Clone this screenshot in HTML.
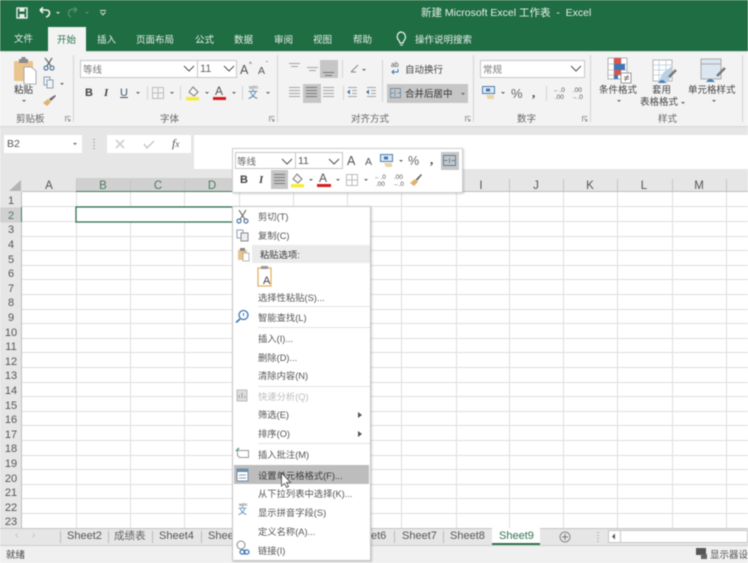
<!DOCTYPE html>
<html lang="zh"><head><meta charset="utf-8"><title>Excel</title>
<style>
*{box-sizing:border-box}
html,body{margin:0;padding:0;width:748px;height:563px;overflow:hidden;background:#fff}
#p{position:relative;width:748px;height:563px;overflow:hidden;font-family:"Liberation Sans","Noto Sans CJK SC",sans-serif;font-size:9.5px;color:#444;filter:blur(.45px)}
.a{position:absolute;white-space:nowrap;line-height:1}
.b{position:absolute}
.w{color:#e6efe9}
.g{color:#666}
.c{transform:translateX(-50%)}
.it{position:absolute;left:258px;margin-top:1px;font-size:9.3px;color:#555;white-space:nowrap;line-height:12px}
.sep{position:absolute;left:258px;width:112px;height:1px;background:#e2e2e2}
.rh{position:absolute;left:0;width:22px;margin-top:1px;text-align:center;font-size:11px;color:#555;line-height:12px}
.ch{position:absolute;top:180px;font-size:11.5px;color:#555;line-height:13px;transform:translateX(-50%)}
.box{position:absolute;background:#fff;border:1px solid #c6c6c6}
svg{position:absolute;overflow:visible}
.dd{position:absolute;width:0;height:0;border-left:2px solid transparent;border-right:2px solid transparent;border-top:2px solid #666}
.vs{position:absolute;width:1px;background:#d4d4d4}
</style></head><body><div id="p">

<!-- title + tabs -->
<div class="b" style="left:0;top:0;width:748px;height:51px;background:#1f6d43"></div>
<svg style="left:0;top:0" width="120" height="26">
<rect x="17" y="8" width="10" height="10" fill="none" stroke="#e6efe9" stroke-width="1.4"/><rect x="19.5" y="8.5" width="5" height="3" fill="#e6efe9"/><rect x="19.5" y="14" width="5" height="4" fill="#e6efe9"/>
<path d="M40 10 L43 7.5 M40 10 L43 13 M40 10 H46 Q49.5 10 49.5 13 Q49.5 16 46 17" fill="none" stroke="#eef4f0" stroke-width="1.6"/>
<path d="M56 12 h4 l-2 2z" fill="#dce8e1"/>
<path d="M77 9.5 L74 7.5 M77 9.5 L74 12.5 M77 9.5 H72 Q68.5 9.5 68.5 13 Q68.5 16 71 17" fill="none" stroke="#558c6e" stroke-width="1.4"/>
<path d="M85 12 h4 l-2 2z" fill="#558c6e"/>
<path d="M100 10.500 h6 M100.500 12 l2.500 3 l2.500-3" fill="none" stroke="#cfe0d6" stroke-width="1"/>
</svg>
<div class="a w" style="left:421px;top:7px;font-size:10.5px;line-height:12px">新建 Microsoft Excel 工作表&nbsp; -&nbsp; Excel</div>
<div class="b" style="left:48px;top:27px;width:38px;height:25px;background:#f3f3f3"></div>
<div class="a w" style="left:14px;top:35px">文件</div>
<div class="a" style="left:57px;top:36px;color:#23724a">开始</div>
<div class="a w" style="left:97px;top:36px">插入</div>
<div class="a w" style="left:136px;top:36px">页面布局</div>
<div class="a w" style="left:195px;top:36px">公式</div>
<div class="a w" style="left:234px;top:36px">数据</div>
<div class="a w" style="left:274px;top:36px">审阅</div>
<div class="a w" style="left:313px;top:36px">视图</div>
<div class="a w" style="left:353px;top:36px">帮助</div>
<svg style="left:394px;top:31px" width="14" height="16"><path d="M5.500 1 a5 5 0 0 1 3.500 8.500 L8 12 H5 L4 9.500 A5 5 0 0 1 5.500 1 Z" transform="translate(1 0)" fill="none" stroke="#eef4f0" stroke-width="1.200"/><path d="M6 14h3" stroke="#eef4f0"/></svg>
<div class="a w" style="left:415px;top:36px">操作说明搜索</div>

<!-- ribbon -->
<div class="b" style="left:0;top:51px;width:748px;height:75px;background:#f3f3f3"></div>
<div class="b" style="left:0;top:51px;width:48px;height:1px;background:#cfdcd4"></div>
<div class="b" style="left:86px;top:51px;width:662px;height:1px;background:#cfdcd4"></div>
<div class="b" style="left:0;top:126px;width:748px;height:1px;background:#d8d8d8"></div>
<div class="vs" style="left:73px;top:55px;height:67px"></div>
<div class="vs" style="left:277px;top:55px;height:67px"></div>
<div class="vs" style="left:473px;top:55px;height:67px"></div>
<div class="vs" style="left:590px;top:55px;height:67px"></div>
<div class="vs" style="left:742px;top:55px;height:67px"></div>

<!-- clipboard -->
<svg style="left:12px;top:56px" width="60" height="52">
<rect x="2" y="5" width="19" height="20" rx="1" fill="#e9c48e"/>
<rect x="7" y="3" width="9" height="4" fill="#8a8a8a"/><rect x="9.500" y="1" width="4" height="3" fill="#8a8a8a"/>
<path d="M12 11 h7 l5 4 v13 h-12z" fill="#fff" stroke="#9a9a9a" stroke-width=".8"/>
<circle cx="34" cy="12" r="2" fill="none" stroke="#5579a0" stroke-width="1.200"/><circle cx="40" cy="12" r="2" fill="none" stroke="#5579a0" stroke-width="1.200"/>
<path d="M35 10 L40 2 M39 10 L33 2" stroke="#666" stroke-width="1.200"/>
<rect x="32" y="21" width="6" height="8" fill="none" stroke="#8aa0b8"/><rect x="35" y="24" width="6" height="8" fill="#f3f3f3" stroke="#8aa0b8"/>
<path d="M48 27 h4 l-2 2z" fill="#666"/>
<path d="M31 47 l5-4 l3 3 l-4 4z" fill="#e0b26e"/><path d="M37 43 l6-4 l1 1 l-5 5z" fill="#666"/>
</svg>
<div class="a" style="left:14px;top:86px;color:#333">粘贴</div>
<div class="dd" style="left:22px;top:100px"></div>
<div class="a g" style="left:16px;top:115px">剪贴板</div>
<svg style="left:65px;top:116px" width="6" height="6"><path d="M.5 5.500V.5H5.500M2 2l3 3M5 3v2H3" fill="none" stroke="#888" stroke-width=".8"/></svg>

<!-- font -->
<div class="box" style="left:80px;top:60px;width:118px;height:18px"></div>
<div class="box" style="left:197px;top:60px;width:40px;height:18px"></div>
<div class="a g" style="left:83px;top:66px;color:#777">等线</div>
<div class="a g" style="left:200px;top:64px;font-size:11px">11</div>
<svg style="left:183px;top:65px" width="12" height="8"><path d="M1 1l5 5 5-5" fill="none" stroke="#555" stroke-width="1.100"/></svg>
<svg style="left:223px;top:65px" width="12" height="8"><path d="M1 1l5 5 5-5" fill="none" stroke="#555" stroke-width="1.100"/></svg>
<div class="a" style="left:240px;top:64px;font-size:12.500px;color:#555">A</div><div class="a" style="left:249px;top:62px;font-size:6px">^</div>
<div class="a" style="left:258px;top:66px;font-size:10.500px;color:#555">A</div><div class="a" style="left:266px;top:62px;font-size:6px">ˇ</div>
<div class="a" style="left:85px;top:88px;font-size:11px;font-weight:bold">B</div>
<div class="a" style="left:104px;top:88px;font-size:11px;font-style:italic;font-family:'Liberation Serif',serif;font-weight:bold">I</div>
<div class="a" style="left:120px;top:88px;font-size:11px;text-decoration:underline;color:#456">U</div>
<div class="dd" style="left:136px;top:92px"></div>
<div class="vs" style="left:147px;top:86px;height:14px"></div>
<svg style="left:152px;top:87px" width="13" height="13"><path d="M.5.5h11v11H.5zM6 .5v11M.5 6h11" fill="none" stroke="#bcbcbc"/></svg>
<div class="dd" style="left:170px;top:92px"></div>
<div class="vs" style="left:180px;top:86px;height:14px"></div>
<svg style="left:186px;top:85px" width="15" height="16"><path d="M7 2l5 5-4 4-5-4z" fill="#f6f6f6" stroke="#777"/><rect x="0" y="12" width="13" height="3.500" fill="#f7ec3c"/></svg>
<div class="dd" style="left:205px;top:92px"></div>
<div class="a" style="left:215px;top:85px;font-size:12px;color:#555">A</div>
<div class="b" style="left:213px;top:97px;width:13px;height:3px;background:#d8191e"></div>
<div class="dd" style="left:232px;top:92px"></div>
<div class="vs" style="left:242px;top:86px;height:14px"></div>
<div class="a" style="left:248px;top:91px;font-size:10px;color:#4c7aaa">文</div><div class="a" style="left:249px;top:86px;font-size:5px;color:#777">wén</div>
<div class="dd" style="left:266px;top:92px"></div>
<div class="a g" style="left:160px;top:115px">字体</div>
<svg style="left:269px;top:116px" width="6" height="6"><path d="M.5 5.500V.5H5.500M2 2l3 3M5 3v2H3" fill="none" stroke="#888" stroke-width=".8"/></svg>

<!-- align -->
<div class="b" style="left:320px;top:60px;width:18px;height:18px;background:#c6c6c6"></div>
<div class="b" style="left:303px;top:84px;width:18px;height:19px;background:#c6c6c6"></div>
<svg style="left:286px;top:60px" width="180" height="44">
<g fill="none" stroke="#a5a5a5" stroke-width="1"><path d="M3 3.500h11M5 6.500h7"/><path d="M21 7.500h11M23 10.500h7"/><path d="M37 12.500h11M39 15.500h7" stroke="#777"/>
<path d="M3 27.500h11M3 30.500h11M3 33.500h11M3 36.500h11"/><path d="M20 27.500h11M20 30.500h11M20 33.500h11M20 36.500h11" stroke="#777"/><path d="M37 27.500h11M37 30.500h11M37 33.500h11M37 36.500h11"/>
<path d="M62 27.500h9M62 36.500h9M66 30.500h5M66 33.500h5"/><path d="M81 27.500h9M81 36.500h9M85 30.500h5M85 33.500h5"/></g>
<path d="M61 32l3-2.500v5z" fill="#3e78b5"/><path d="M80 32l3-2.500v5z" fill="#3e78b5"/>
<path d="M65 12 L72 5 M65 12h5" stroke="#888" fill="none"/>
<path d="M76 9h4l-2 2z" fill="#666"/>
</svg>
<div class="vs" style="left:342px;top:60px;height:18px"></div>
<div class="vs" style="left:343px;top:86px;height:14px"></div>
<div class="vs" style="left:382px;top:60px;height:42px"></div>
<div class="a" style="left:391px;top:62px;font-size:7px;color:#555">ab</div>
<svg style="left:391px;top:69px" width="9" height="6"><path d="M7 0v3H1M3 1L1 3l2 2" fill="none" stroke="#3e78b5"/></svg>
<div class="a" style="left:405px;top:66px;color:#444">自动换行</div>
<div class="b" style="left:387px;top:84px;width:81px;height:19px;background:#c6c6c6"></div>
<svg style="left:390px;top:88px" width="12" height="11"><path d="M.5.5h10v9H.5z M.5 5h3M7.500 5h3M5 2v6" fill="none" stroke="#6d8ea8" stroke-width=".9"/></svg>
<div class="a" style="left:405px;top:90px;color:#333">合并后居中</div>
<div class="dd" style="left:461px;top:93px"></div>
<div class="a g" style="left:351px;top:115px">对齐方式</div>
<svg style="left:465px;top:116px" width="6" height="6"><path d="M.5 5.500V.5H5.500M2 2l3 3M5 3v2H3" fill="none" stroke="#888" stroke-width=".8"/></svg>

<!-- number -->
<div class="box" style="left:480px;top:60px;width:105px;height:18px"></div>
<div class="a" style="left:483px;top:66px;color:#777">常规</div>
<svg style="left:570px;top:65px" width="12" height="8"><path d="M1 1l5 5 5-5" fill="none" stroke="#555" stroke-width="1.100"/></svg>
<svg style="left:482px;top:86px" width="14" height="14"><rect x=".5" y=".5" width="12" height="7" fill="#dfe8f0" stroke="#4a80b0"/><rect x="4" y="2.500" width="4" height="3" fill="#3e78b5"/><path d="M4 9h8v4H6z" fill="#ecd2a8"/></svg>
<div class="dd" style="left:501px;top:92px"></div>
<div class="a g" style="left:511px;top:87px;font-size:13px;color:#666">%</div>
<div class="a" style="left:532px;top:86px;font-size:13px;font-weight:bold;color:#444;font-family:'Liberation Serif',serif">,</div>
<div class="vs" style="left:546px;top:86px;height:15px"></div>
<div class="a" style="left:553px;top:87px;font-size:6.500px;color:#555;line-height:7px;white-space:pre"><span style="color:#3e78b5">←</span>.0
 .00</div>
<div class="a" style="left:571px;top:87px;font-size:6.500px;color:#555;line-height:7px;white-space:pre"> .00
<span style="color:#3e78b5">→</span>.0</div>
<div class="a g" style="left:517px;top:115px">数字</div>
<svg style="left:582px;top:116px" width="6" height="6"><path d="M.5 5.500V.5H5.500M2 2l3 3M5 3v2H3" fill="none" stroke="#888" stroke-width=".8"/></svg>

<!-- styles -->
<svg style="left:600px;top:56px" width="145" height="30">
<rect x="8" y="2" width="19" height="21" fill="#fff" stroke="#b0b0b0"/>
<path d="M8 8h19M8 14h19M8 19h19M14 2v21M21 2v21" stroke="#c9c9c9" fill="none"/>
<rect x="14" y="2" width="7" height="6" fill="#d8554e"/><rect x="14" y="8" width="11" height="6" fill="#3e78b5"/><rect x="14" y="14" width="7" height="5" fill="#d8554e"/><rect x="14" y="19" width="4" height="4" fill="#3e78b5"/>
<rect x="21" y="17" width="10" height="10" fill="#fff" stroke="#999"/><path d="M24 21h5M24 23h5M28 19l-3 6" stroke="#555" stroke-width=".7"/>
<rect x="53" y="4" width="19" height="21" fill="#fff" stroke="#b4b4b4"/><path d="M53 9h19M53 14h19M53 19h19M59 4v21M66 4v21" stroke="#c6d5e3"/>
<path d="M58 27l5-10 9-7v10l-5 7z" fill="#b9cfe3"/><path d="M58 27q4-6 8 0z" fill="#4a80b0"/><path d="M69 21l7-7" stroke="#777" stroke-width="2.500"/>
<rect x="101" y="3" width="20" height="20" fill="#dbe6f0" stroke="#aaa"/><path d="M101 8h20" stroke="#aaa"/>
<path d="M106 26q4-6 9 0z" fill="#4a80b0"/><path d="M117 20l8-8" stroke="#777" stroke-width="2.500"/>
</svg>
<div class="a" style="left:599px;top:86px;color:#444">条件格式</div>
<div class="dd" style="left:617px;top:100px"></div>
<div class="a" style="left:652px;top:86px;color:#444">套用</div>
<div class="a" style="left:640px;top:98px;color:#444">表格格式</div>
<div class="dd" style="left:681px;top:102px"></div>
<div class="a" style="left:688px;top:86px;color:#444">单元格样式</div>
<div class="dd" style="left:712px;top:100px"></div>
<div class="a g" style="left:658px;top:115px">样式</div>

<!-- formula bar -->
<div class="b" style="left:0;top:127px;width:748px;height:51px;background:#e6e6e6"></div>
<div class="b" style="left:4px;top:135px;width:78px;height:18px;background:#fff"></div>
<div class="a" style="left:7px;top:139px;font-size:10.500px;color:#555">B2</div>
<div class="dd" style="left:73px;top:143px"></div>
<svg style="left:93px;top:138px" width="3" height="13"><path d="M1 1v1M1 4v1M1 7v1M1 10v1" stroke="#999" stroke-width="1.500"/></svg>
<div class="b" style="left:107px;top:135px;width:84px;height:18px;background:#fff"></div>
<svg style="left:115px;top:139px" width="45" height="11"><path d="M1 1l8 8M9 1l-8 8" stroke="#c4c4c4" stroke-width="1.300" fill="none"/><path d="M29 5l3 4 7-7" stroke="#c4c4c4" stroke-width="1.300" fill="none"/></svg>
<div class="a" style="left:172px;top:137px;font-size:12px;font-style:italic;font-family:'Liberation Serif',serif;color:#555"><i>f</i><span style="font-size:9px">x</span></div>
<div class="b" style="left:194px;top:135px;width:554px;height:34px;background:#fff"></div>

<!-- grid -->
<div class="b" style="left:0;top:178px;width:748px;height:14px;background:#e6e6e6"></div>
<div class="b" style="left:0;top:192px;width:22px;height:336px;background:#e6e6e6"></div>
<svg style="left:0;top:178px" width="748" height="350">
<path d="M9 13L21 2V13Z" fill="#b4b4b4"/>
<rect x="76" y="0" width="163" height="14" fill="#d0d0d0"/>
<rect x="0" y="29.500" width="22" height="15" fill="#d0d0d0"/>
<g stroke="#dfdfdf" stroke-width="1">
<path d="M76.500 14V350M130.500 14V350M184.500 14V350M239.500 14V350M293.500 14V350M347.500 14V350M401.500 14V350M456.500 14V350M509.500 14V350M563.500 14V350M617.500 14V350M672.500 14V350M726.500 14V350"/>
<path d="M22 28.500H748M22 43.500H748M22 58.500H748M22 72.500H748M22 87.500H748M22 101.500H748M22 116.500H748M22 131.500H748M22 145.500H748M22 160.500H748M22 174.500H748M22 189.500H748M22 204.500H748M22 218.500H748M22 233.500H748M22 247.500H748M22 262.500H748M22 277.500H748M22 291.500H748M22 306.500H748M22 320.500H748M22 335.500H748"/>
</g>
<g stroke="#c6c6c6"><path d="M76.500 1V13M130.500 1V13M184.500 1V13M239.500 1V13M293.500 1V13M347.500 1V13M401.500 1V13M456.500 1V13M509.500 1V13M563.500 1V13M617.500 1V13M672.500 1V13M726.500 1V13"/></g>
<path d="M22 13.500H748" stroke="#bdbdbd"/>
<path d="M21.500 14V350" stroke="#bdbdbd"/>
<path d="M76 13.500H239" stroke="#3f7a59" stroke-width="1"/>
<path d="M21.500 29V44" stroke="#3f7a59" stroke-width="1"/>
<rect x="76" y="29" width="163" height="15" fill="#fff" stroke="#2f7350" stroke-width="1.300"/>
</svg>
<div class="ch" style="left:49px">A</div><div class="ch" style="left:103px;color:#4f7a63">B</div><div class="ch" style="left:158px;color:#4f7a63">C</div><div class="ch" style="left:212px;color:#4f7a63">D</div>
<div class="ch" style="left:481px">I</div><div class="ch" style="left:536px">J</div><div class="ch" style="left:590px">K</div><div class="ch" style="left:644px">L</div><div class="ch" style="left:699px">M</div>

<div class="rh" style="top:194px">1</div><div class="rh" style="top:209px;color:#4f7a63">2</div><div class="rh" style="top:223px">3</div><div class="rh" style="top:238px">4</div><div class="rh" style="top:253px">5</div><div class="rh" style="top:267px">6</div><div class="rh" style="top:282px">7</div><div class="rh" style="top:296px">8</div><div class="rh" style="top:311px">9</div><div class="rh" style="top:326px">10</div><div class="rh" style="top:340px">11</div><div class="rh" style="top:355px">12</div><div class="rh" style="top:369px">13</div><div class="rh" style="top:384px">14</div><div class="rh" style="top:399px">15</div><div class="rh" style="top:413px">16</div><div class="rh" style="top:428px">17</div><div class="rh" style="top:442px">18</div><div class="rh" style="top:457px">19</div><div class="rh" style="top:472px">20</div><div class="rh" style="top:486px">21</div><div class="rh" style="top:501px">22</div><div class="rh" style="top:515px">23</div>

<!-- sheet tabs -->
<div class="b" style="left:0;top:528px;width:748px;height:18px;background:#e6e6e6;border-top:1px solid #c6c6c6;border-bottom:1px solid #cfcfcf"></div>
<div class="a" style="left:15px;top:531px;font-size:10px;color:#bbb">‹</div><div class="a" style="left:32px;top:531px;font-size:10px;color:#bbb">›</div>
<div class="vs" style="left:60px;top:531px;height:12px;background:#bbb"></div>
<div class="a" style="left:67px;top:530px;font-size:11px;line-height:13px;color:#555">Sheet2</div>
<div class="vs" style="left:108px;top:531px;height:12px;background:#bbb"></div>
<div class="a" style="left:114px;top:530px;font-size:10.500px;line-height:13px;color:#666">成绩表</div>
<div class="vs" style="left:152px;top:531px;height:12px;background:#bbb"></div>
<div class="a" style="left:159px;top:530px;font-size:11px;line-height:13px;color:#555">Sheet4</div>
<div class="vs" style="left:201px;top:531px;height:12px;background:#bbb"></div>
<div class="a" style="left:208px;top:530px;font-size:11px;line-height:13px;color:#555">Shee</div>
<div class="a" style="left:371px;top:530px;font-size:11px;line-height:13px;color:#555">et6</div>
<div class="vs" style="left:394px;top:531px;height:12px;background:#bbb"></div>
<div class="a" style="left:402px;top:530px;font-size:11px;line-height:13px;color:#555">Sheet7</div>
<div class="vs" style="left:443px;top:531px;height:12px;background:#bbb"></div>
<div class="a" style="left:450px;top:530px;font-size:11px;line-height:13px;color:#555">Sheet8</div>
<div class="b" style="left:492px;top:528px;width:48px;height:17px;background:#fff;border-bottom:2px solid #2f7350"></div>
<div class="a" style="left:499px;top:530px;font-size:11px;line-height:13px;color:#2f7350">Sheet9</div>
<svg style="left:559px;top:531px" width="12" height="12"><circle cx="6" cy="6" r="5" fill="none" stroke="#888"/><path d="M3 6h6M6 3v6" stroke="#777"/></svg>
<svg style="left:597px;top:532px" width="3" height="10"><path d="M1 0v1M1 3v1M1 6v1M1 9v1" stroke="#aaa" stroke-width="1.500"/></svg>
<div class="b" style="left:608px;top:530px;width:140px;height:13px;background:#fff;border:1px solid #c6c6c6"></div>
<div class="vs" style="left:620px;top:530px;height:13px;background:#c6c6c6"></div>
<svg style="left:611px;top:533px" width="5" height="7"><path d="M4 .5v6L1 3.500z" fill="#555"/></svg>

<!-- status -->
<div class="b" style="left:0;top:546px;width:748px;height:17px;background:#f0f0f0"></div>
<div class="a" style="left:6px;top:551px;color:#444">就绪</div>
<svg style="left:696px;top:548px" width="12" height="12"><rect x="0" y="0" width="10" height="7" fill="#555"/><rect x="5" y="6" width="6" height="5" fill="#666"/></svg>
<div class="a" style="left:710px;top:551px;color:#555">显示器设</div>

<!-- mini toolbar -->
<div class="b" style="left:232px;top:148px;width:231px;height:45px;background:#fff;border:1px solid #d0d0d0;box-shadow:1px 1px 2px rgba(0,0,0,.18)"></div>
<div class="box" style="left:235px;top:152px;width:61px;height:17px"></div>
<div class="box" style="left:295px;top:152px;width:48px;height:17px"></div>
<div class="a" style="left:237px;top:158px;color:#666">等线</div>
<div class="a" style="left:298px;top:156px;font-size:10.500px;color:#555">11</div>
<svg style="left:281px;top:158px" width="12" height="8"><path d="M1 1l5 5 5-5" fill="none" stroke="#555" stroke-width="1.100"/></svg>
<svg style="left:328px;top:158px" width="12" height="8"><path d="M1 1l5 5 5-5" fill="none" stroke="#555" stroke-width="1.100"/></svg>
<div class="a" style="left:347px;top:155px;font-size:12.500px;color:#555">A</div>
<div class="a" style="left:365px;top:157px;font-size:10.500px;color:#555">A</div>
<svg style="left:380px;top:154px" width="14" height="14"><rect x=".5" y=".5" width="12" height="7" fill="#dfe8f0" stroke="#4a80b0"/><rect x="4" y="2.500" width="4" height="3" fill="#3e78b5"/><path d="M4 9h8v4H6z" fill="#ecd2a8"/></svg>
<div class="dd" style="left:399px;top:160px"></div>
<div class="a" style="left:408px;top:155px;font-size:12.500px;color:#666">%</div>
<div class="a" style="left:430px;top:153px;font-size:13px;font-weight:bold;color:#444;font-family:'Liberation Serif',serif">,</div>
<div class="b" style="left:441px;top:152px;width:18px;height:18px;background:#c6c6c6"></div>
<svg style="left:443px;top:155px" width="14" height="12"><path d="M.5.5h12v10H.5z M.5 5.500h4M8.500 5.500h4M6.500 3v5" fill="none" stroke="#5c7f9e" stroke-width=".9"/></svg>
<div class="a" style="left:240px;top:175px;font-size:11px;font-weight:bold">B</div>
<div class="a" style="left:259px;top:175px;font-size:11px;font-weight:bold;font-style:italic;font-family:'Liberation Serif',serif">I</div>
<div class="b" style="left:271px;top:170px;width:17px;height:19px;background:#c6c6c6"></div>
<svg style="left:274px;top:174px" width="11" height="11"><path d="M0 .5h11M0 3.500h11M0 6.500h11M0 9.500h11" stroke="#777"/></svg>
<svg style="left:290px;top:172px" width="15" height="16"><path d="M7 2l5 5-4 4-5-4z" fill="#f6f6f6" stroke="#777"/><rect x="1" y="12" width="13" height="3.500" fill="#f7ec3c"/></svg>
<div class="dd" style="left:309px;top:179px"></div>
<div class="a" style="left:319px;top:172px;font-size:12px;color:#555">A</div>
<div class="b" style="left:317px;top:184px;width:14px;height:3px;background:#d8191e"></div>
<div class="dd" style="left:336px;top:179px"></div>
<svg style="left:346px;top:174px" width="13" height="13"><path d="M.5.5h11v11H.5zM6 .5v11M.5 6h11" fill="none" stroke="#bcbcbc"/></svg>
<div class="dd" style="left:364px;top:179px"></div>
<div class="a" style="left:374px;top:174px;font-size:6.500px;color:#555;line-height:7px;white-space:pre"><span style="color:#3e78b5">←</span>.0
 .00</div>
<div class="a" style="left:392px;top:174px;font-size:6.500px;color:#555;line-height:7px;white-space:pre"> .00
<span style="color:#3e78b5">→</span>.0</div>
<svg style="left:409px;top:173px" width="14" height="14"><path d="M1 10l5-4 3 3-4 4z" fill="#e0b26e"/><path d="M7 6l5-5 1 1-5 6z" fill="#666"/></svg>

<!-- context menu -->
<div class="b" style="left:232px;top:206px;width:139px;height:355px;background:#fff;border:1px solid #c4c4c4;box-shadow:1px 1px 2px rgba(0,0,0,.18)"></div>
<div class="b" style="left:252px;top:245px;width:118px;height:18px;background:#ebebeb"></div>
<div class="b" style="left:234px;top:465px;width:135px;height:19px;background:#bdbdbd"></div>

<div class="it" style="top:210px">剪切(T)</div>
<div class="it" style="top:229px">复制(C)</div>
<div class="it" style="top:248px;left:260px;color:#333">粘贴选项:</div>
<div class="it" style="top:291px">选择性粘贴(S)...</div>
<div class="sep" style="top:306px"></div>
<div class="it" style="top:311px">智能查找(L)</div>
<div class="sep" style="top:327px"></div>
<div class="it" style="top:332px">插入(I)...</div>
<div class="it" style="top:351px">删除(D)...</div>
<div class="it" style="top:369px">清除内容(N)</div>
<div class="sep" style="top:386px"></div>
<div class="it" style="top:390px;color:#bbb">快速分析(Q)</div>
<div class="it" style="top:408px">筛选(E)</div>
<div class="it" style="top:427px">排序(O)</div>
<div class="sep" style="top:443px"></div>
<div class="it" style="top:448px">插入批注(M)</div>
<div class="it" style="top:469px;color:#3a3a3a">设置单元格格式(F)...</div>
<div class="it" style="top:487px">从下拉列表中选择(K)...</div>
<div class="it" style="top:506px">显示拼音字段(S)</div>
<div class="it" style="top:525px">定义名称(A)...</div>
<div class="it" style="top:544px">链接(I)</div>

<svg style="left:232px;top:206px" width="139" height="355">
<!-- cut -->
<circle cx="7" cy="15" r="2" fill="none" stroke="#5579a0" stroke-width="1.200"/><circle cx="14" cy="15" r="2" fill="none" stroke="#5579a0" stroke-width="1.200"/>
<path d="M8 13.500L14 4M13 13.500L7 4" stroke="#666" stroke-width="1.100"/>
<!-- copy -->
<rect x="5" y="24" width="6" height="8" fill="#fff" stroke="#8aa0b8"/><rect x="9" y="27" width="7" height="8" fill="#eee" stroke="#8a8a8a"/>
<!-- paste -->
<rect x="6" y="44" width="9" height="10" fill="#e9c48e"/><rect x="8" y="42" width="5" height="3" fill="#888"/><rect x="11" y="47" width="6" height="8" fill="#fff" stroke="#999" stroke-width=".7"/>
<!-- paste text option -->
<rect x="26" y="62" width="13" height="18" fill="#fff" stroke="#e3b26e" stroke-width="1.300"/><rect x="29" y="60" width="7" height="3" fill="#999"/>
<!-- smart lookup -->
<circle cx="11.500" cy="109" r="4.500" fill="#fff" stroke="#3e78b5" stroke-width="1.300"/><path d="M8 113l-4 3.500" stroke="#3e78b5" stroke-width="1.800"/><path d="M11.500 107v3" stroke="#3e78b5"/>
<!-- quick -->
<rect x="5" y="184" width="10" height="11" fill="#ddd" stroke="#bbb"/><path d="M7 192v-3M10 192v-5M13 192v-2" stroke="#999"/>
<!-- comment -->
<path d="M5.500 244.500h11v7h-9l-2-2z" fill="#fff" stroke="#999"/><path d="M4 245l3-3" stroke="#5d9c7a" stroke-width="1.500"/>
<!-- format cells -->
<rect x="5" y="263" width="11" height="12" fill="#fff" stroke="#6d8ea8"/><rect x="5" y="263" width="11" height="3" fill="#6d8ea8"/><path d="M7 269h7M7 272h7" stroke="#8aa0b8"/>
<!-- link -->
<circle cx="9" cy="339" r="4" fill="none" stroke="#888"/><rect x="8" y="344" width="5" height="4" rx="2" fill="none" stroke="#3e78b5" stroke-width="1.200"/><rect x="12" y="344" width="5" height="4" rx="2" fill="none" stroke="#3e78b5" stroke-width="1.200"/>
<!-- submenu arrows -->
<path d="M126 206l4 3-4 3z" fill="#555"/><path d="M126 225l4 3-4 3z" fill="#555"/>
<!-- cursor -->
<path d="M49.500 267v13l3-2.500 2 4 2-1-2-4h4z" fill="#fff" stroke="#444" stroke-width=".8"/>
</svg>
<div class="a" style="left:263px;top:276px;font-size:11px;color:#444">A</div>
<div class="a" style="left:238px;top:507px;font-size:9px;color:#3e78b5">文</div><div class="a" style="left:239px;top:503px;font-size:4.500px;color:#555">wén</div>

</div></body></html>
